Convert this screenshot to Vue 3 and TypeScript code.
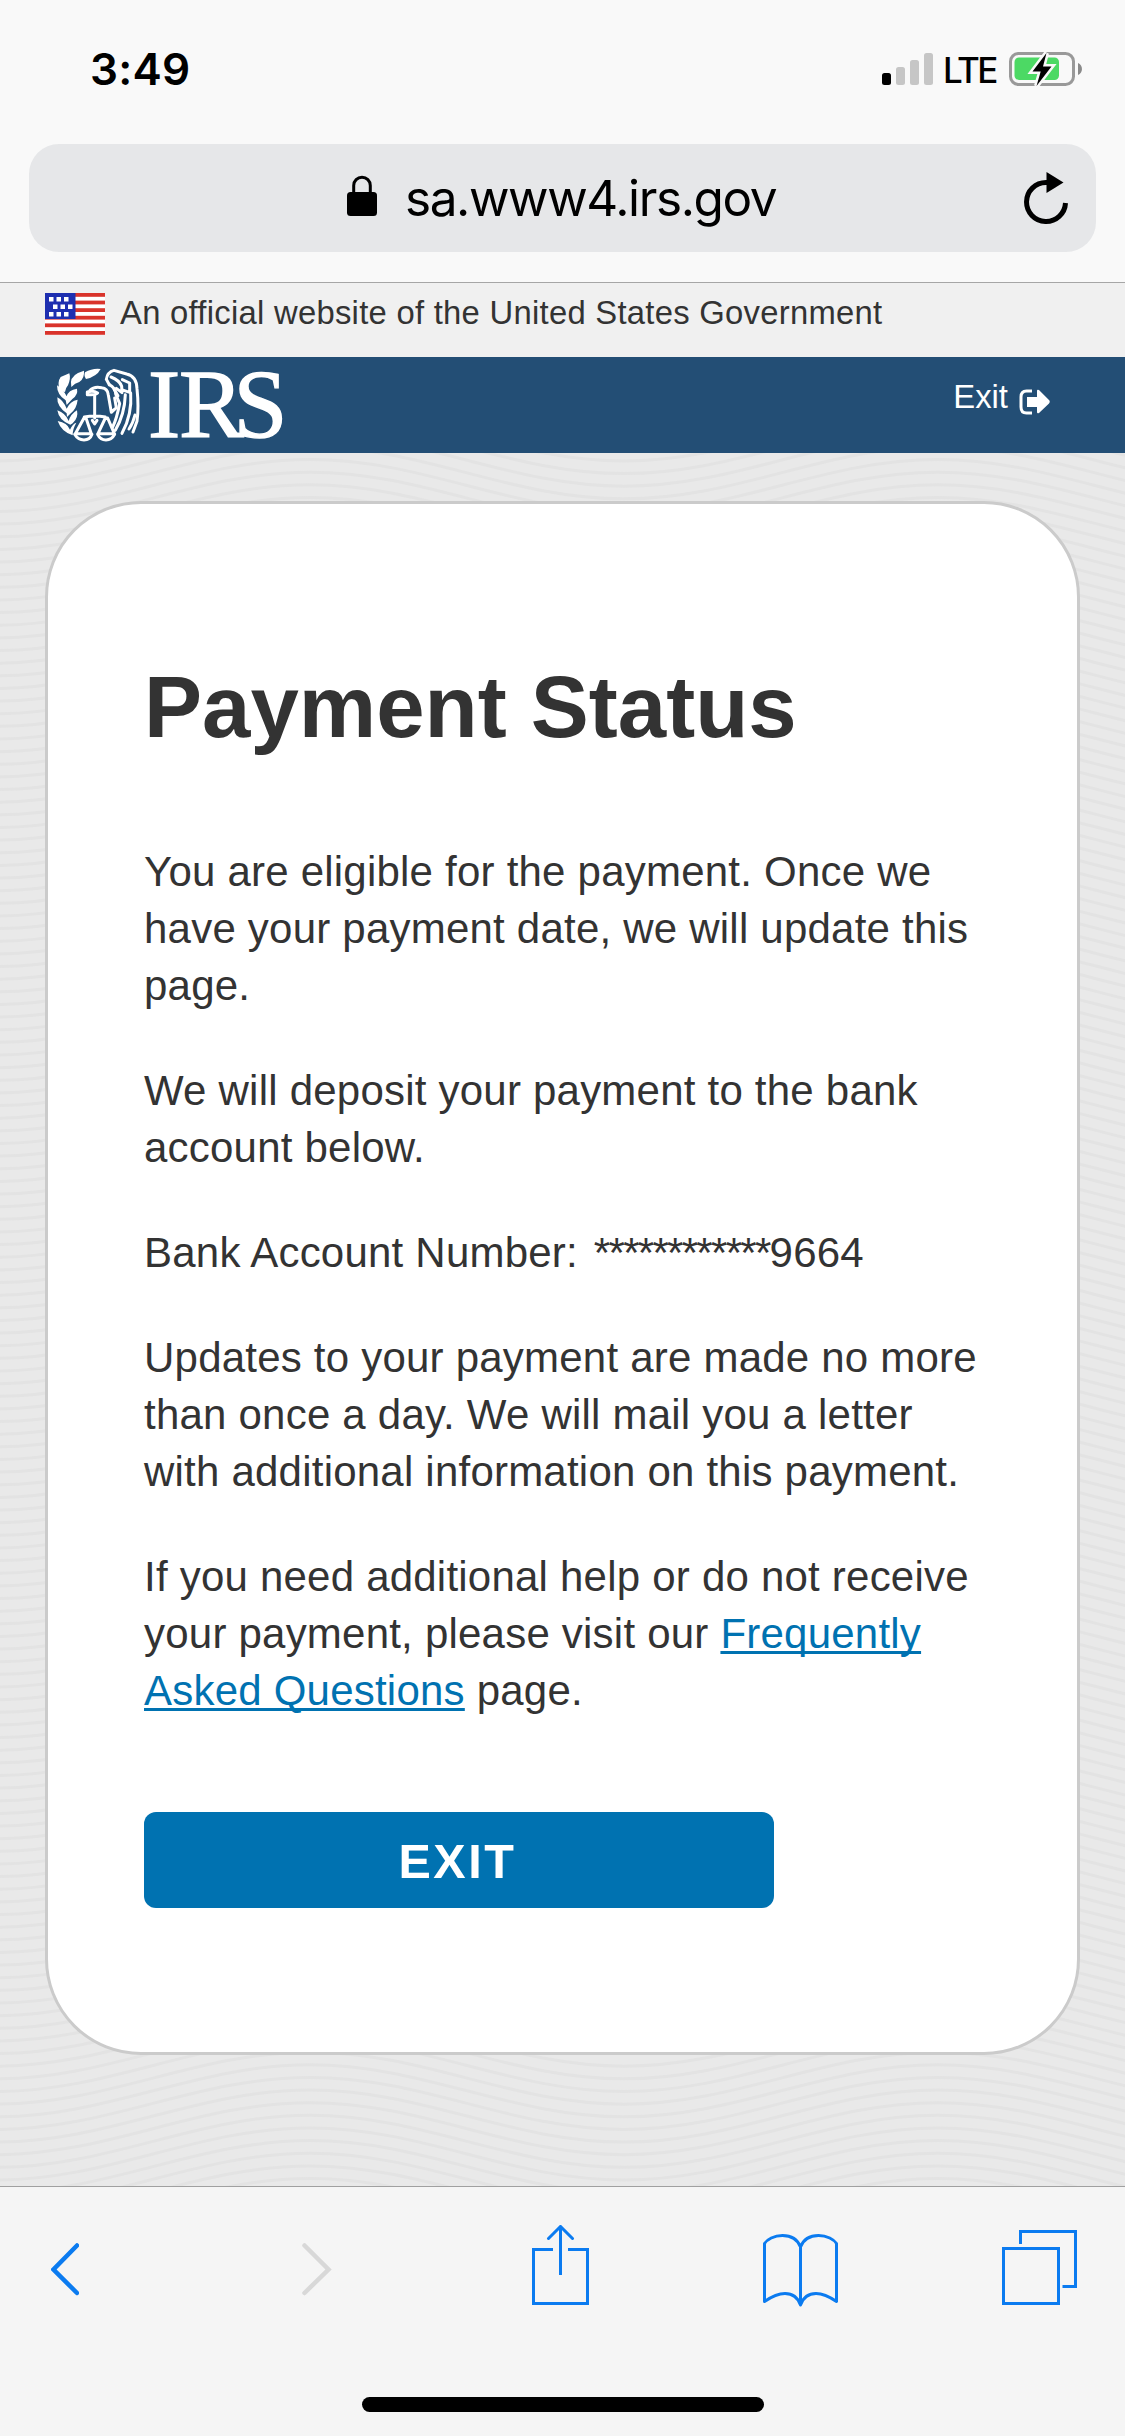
<script setup lang="ts">
interface SignalBar {
  x: number
  height: number
  active: boolean
}

const signalBars: SignalBar[] = [
  { x: 0, height: 12, active: true },
  { x: 14, height: 18, active: false },
  { x: 28, height: 25, active: false },
  { x: 42, height: 32, active: false },
]

const accountMask = '************'
const accountEnding = '9664'

const stripes = [0, 7.6, 15.2, 22.8, 30.4, 38]

const stars = [
  [4, 4], [11.5, 4], [19, 4],
  [8, 11.5], [15.5, 11.5], [23, 11.5],
  [4, 19], [11.5, 19], [19, 19],
]

// wavy page background, one path per line
const waveRise = 52
const waveGap = 12.64

const waves = Array.from({ length: 143 }, (_, i) => {
  const crest = -56.7 + i * waveGap
  const trough = crest + waveRise
  return (
    `M-4 ${trough}C110 ${trough} 196 ${crest} 310 ${crest}` +
    `S510 ${trough} 624 ${trough}S824 ${crest} 938 ${crest}` +
    `S1138 ${trough} 1252 ${trough}`
  )
})
</script>

<template>
  <div class="screen">
    <header class="browser-top">
      <div class="status-bar">
        <span class="time">3:49</span>
        <div class="status-icons">
          <svg class="signal" width="51" height="32" viewBox="0 0 51 32">
            <rect
              v-for="bar in signalBars"
              :key="bar.x"
              :x="bar.x"
              :y="32 - bar.height"
              width="9"
              :height="bar.height"
              rx="2.5"
              :fill="bar.active ? '#000' : '#c6c6c6'"
            />
          </svg>
          <span class="network">LTE</span>
          <svg class="battery" width="73" height="34" viewBox="0 0 73 34">
            <rect x="1.5" y="1.5" width="63" height="31" rx="8" fill="none" stroke="#999" stroke-width="3" />
            <rect x="5.5" y="5.5" width="44.5" height="22.5" rx="4.5" fill="#4cd964" />
            <path d="M69 11c5.3 2 5.3 10 0 12z" fill="#8a8a8a" />
            <path
              d="M37.5 1L23.5 19.5h8.2L27.5 34 42.5 14.5h-8.5z"
              fill="#000"
              stroke="#f9f9f9"
              stroke-width="5"
              paint-order="stroke"
            />
          </svg>
        </div>
      </div>

      <div class="address-bar">
        <svg class="lock" width="30" height="42" viewBox="0 0 30 42">
          <path d="M6.7 20V10.500a8.300 8.300 0 0 1 16.600 0V20" fill="none" stroke="#000" stroke-width="3" />
          <rect x="0" y="17" width="30" height="24" rx="3.5" />
        </svg>
        <span class="url">sa.www4.irs.gov</span>
        <svg class="reload" width="46" height="54" viewBox="0 0 46 54">
          <path d="M41.5 32A19.5 19.5 0 1 1 22 11.5H24" fill="none" stroke="#000" stroke-width="5" />
          <path d="M22.5 1L39.5 11.5 22.5 22z" />
        </svg>
      </div>
    </header>

    <div class="gov-banner">
      <svg class="flag" width="60" height="42" viewBox="0 0 60 42">
        <rect width="60" height="42" fill="#fff" />
        <rect v-for="y in stripes" :key="y" :y="y" width="60" height="3.8" fill="#d9332b" />
        <rect width="30.5" height="26" fill="#1e2fb0" />
        <rect
          v-for="([x, y], index) in stars"
          :key="index"
          :x="x"
          :y="y"
          width="4.5"
          height="4.5"
          fill="#fff"
        />
      </svg>
      <span>An official website of the United States Government</span>
    </div>

    <nav class="irs-bar">
      <svg class="irs-logo" width="240" height="96" viewBox="0 0 240 96">
        <g transform="translate(0 3) scale(0.3333)" fill="#fff">
          <!-- olive branch -->
          <path d="M120 37Q142 24 167 27Q155 50 123 57Q116 48 120 37Z" />
          <path d="M79 81Q72 52 99 39L117 32Q119 55 103 66Q90 69 79 81Z" />
          <path d="M44 92Q36 66 47 51L73 40Q78 55 69 76Q61 85 60 96Z" />
          <path d="M62 121Q36 105 36 76Q53 86 65 109Q70 90 96 86Q100 104 82 117L65 135Z" />
          <path d="M65 160Q35 139 37 112Q54 120 65 146Q75 123 98 119Q95 147 76 161L66 171Z" />
          <path d="M76 194Q42 182 37 151Q61 159 71 183Q77 162 96 151Q101 174 83 190Z" />
          <path d="M83 226Q49 215 38 183Q67 188 75 209Q83 191 94 188Q82 209 83 226Z" />
          <g fill="none" stroke="#fff" stroke-width="9" stroke-linejoin="round" stroke-linecap="round">
            <!-- eagle -->
            <path d="M127 104V96Q145 91 158 99Q153 106 129 104M135 91Q147 78 170 83Q188 84 190 105L199 157L214 143L209 114" />
            <path d="M193 74L184 58Q187 36 207 31L245 42Q275 49 276 86Q282 142 276 184L264 216" />
            <path d="M193 74Q211 83 212 102L224 131Q215 177 203 201" />
            <path d="M198 51Q224 61 230 79L231 98L214 85M232 59L254 69V97L236 91" />
            <path d="M241 104Q239 163 211 211M257 99Q262 164 231 220M219 107L207 87M270 165Q264 190 252 207" />
            <!-- scales -->
            <path d="M149 105V174M118 171Q149 165 181 171" />
            <path d="M117 174L91 221H139L123 174M181 174L159 221H208L188 174" />
            <path d="M89 223Q99 240 117 240T141 223M158 223Q166 240 183 240T209 223" />
            <path d="M142 181L149 192L156 181" />
          </g>
        </g>
        <text class="irs-word" x="103 134 188.5" y="79.5">IRS</text>
      </svg>
      <a class="exit-link">
        Exit
        <svg width="31" height="26" viewBox="0 0 31 26">
          <path d="M13 2H7.500Q2 2 2 8v10q0 6 5.500 6H13" fill="none" stroke="#fff" stroke-width="3" />
          <path d="M8 8h10V2q0-2 2-1l10 10q1.500 1.700 0 3.400L20 24q-2 1-2-1v-5H8z" fill="#fff" />
        </svg>
      </a>
    </nav>

    <main class="page">
      <svg class="waves" width="1125" height="1733" viewBox="0 0 1125 1733">
        <path v-for="(d, index) in waves" :key="index" :d="d" />
      </svg>
      <section class="card">
        <h1>Payment Status</h1>
        <p>You are eligible for the payment. Once we have your payment date, we will update this page.</p>
        <p>We will deposit your payment to the bank account below.</p>
        <p>Bank Account Number: <span class="mask">{{ accountMask }}</span>{{ accountEnding }}</p>
        <p>
          Updates to your payment are made no more than once a day. We will mail you a letter with
          additional information on this payment.
        </p>
        <p>
          If you need additional help or do not receive your payment, please visit our
          <a class="faq">Frequently Asked Questions</a> page.
        </p>
        <button type="button">EXIT</button>
      </section>
    </main>

    <footer class="toolbar">
      <div class="tools">
        <svg width="28" height="82" viewBox="0 0 28 82">
          <path class="chevron" d="M26 20.5L2.500 44.500 26 68" />
        </svg>
        <svg width="30" height="82" viewBox="0 0 30 82">
          <path class="chevron disabled" d="M2.500 20.5L26.500 44.500 2.500 68" />
        </svg>
        <svg width="57" height="82" viewBox="0 0 57 82">
          <path d="M21 24.5H1.5v54h54v-54H36M28.5 50V3" />
          <path d="M16.5 13.5L28.5 1.5 40.5 13.5" stroke-linecap="round" />
        </svg>
        <svg width="75" height="82" viewBox="0 0 75 82">
          <path
            d="M37.500 80V22C34 13 27 10.500 19.500 10.500 11 10.500 4 14.500 1.500 18.500V76.500C11 70 17 68.500 22 68.500 30 68.500 35 73 37.500 80C40 73 45 68.500 53 68.500 58 68.500 64 70 73.500 76.500V18.500C71 14.500 64 10.500 55.500 10.500 48 10.500 41 13 37.500 22"
            stroke-linejoin="round"
          />
        </svg>
        <svg width="75" height="82" viewBox="0 0 75 82">
          <rect x="1.5" y="23.5" width="55" height="55" />
          <path d="M18.5 19V6.5h55v55H60.5" />
        </svg>
      </div>
      <div class="home-indicator"></div>
    </footer>
  </div>
</template>

<style>
body {
  margin: 0;
}
</style>

<style scoped>
.screen {
  width: 1125px;
  height: 2436px;
  display: flex;
  flex-direction: column;
  overflow: hidden;
  background: #f9f9f9;
  color: #333333;
  font-family: "Liberation Sans", Arial, sans-serif;
}

svg {
  display: block;
  flex-shrink: 0;
}

.browser-top {
  box-sizing: border-box;
  height: 283px;
  border-bottom: 1px solid #a6a6a6;
  color: #000000;
  font-family: Inter, sans-serif;
}

.status-bar {
  height: 144px;
  box-sizing: border-box;
  padding: 0 43px 6px 90px;
  display: flex;
  align-items: center;
  justify-content: space-between;
}

.time {
  font-size: 44px;
  font-weight: 600;
  letter-spacing: 0.2px;
}

.status-icons {
  display: flex;
  align-items: center;
}

.network {
  width: 52px;
  margin: 2px 14px 0 10px;
  font-size: 35px;
  font-weight: 500;
  letter-spacing: -2.6px;
  white-space: nowrap;
}

.address-bar {
  height: 108px;
  box-sizing: border-box;
  margin: 0 29px;
  padding: 0 26px 0 318px;
  border-radius: 30px;
  background: #e6e7e9;
  display: flex;
  align-items: center;
}

.lock {
  margin-top: -4px;
}

.url {
  margin-left: 28px;
  font-size: 49.5px;
  letter-spacing: -1.4px;
}

.reload {
  margin-left: auto;
}

.gov-banner {
  height: 74px;
  box-sizing: border-box;
  padding: 10px 45px 0;
  background: #f0f0f0;
  display: flex;
  gap: 15px;
  font-size: 32.8px;
  line-height: 40px;
  letter-spacing: 0.27px;
}

.irs-bar {
  height: 96px;
  padding: 0 75px 0 45px;
  background: #234e75;
  display: flex;
  justify-content: space-between;
}

.irs-logo {
  overflow: visible;
}

.irs-word {
  font-family: "Liberation Serif", serif;
  font-size: 97px;
  fill: #ffffff;
  stroke: #ffffff;
  stroke-width: 1.4;
}

.exit-link {
  display: flex;
  gap: 11px;
  color: #ffffff;
  font-size: 32.8px;
  line-height: 80px;
}

.exit-link svg {
  margin-top: 32px;
}

.page {
  position: relative;
  height: 1733px;
  box-sizing: border-box;
  padding: 48px 45px 0;
  background: #e9e9e9;
}

.waves {
  position: absolute;
  inset: 0;
  fill: none;
  stroke: #e3e3e3;
  stroke-width: 3;
}

.card {
  position: relative;
  box-sizing: border-box;
  height: 1554px;
  padding: 151px 96px 0;
  border: 3px solid #cbcbcb;
  border-radius: 96px;
  background: #ffffff;
}

h1 {
  margin: 0 0 84px;
  font-size: 87px;
  line-height: 104px;
  letter-spacing: 0;
}

p {
  margin: 0 0 48px;
  font-size: 42px;
  line-height: 57px;
  letter-spacing: 0.22px;
}

.mask {
  margin-left: 4px;
  letter-spacing: -1.7px;
}

.faq {
  color: #0072b1;
  text-decoration: underline;
  text-decoration-thickness: 3px;
  text-underline-offset: 3px;
  text-decoration-skip-ink: none;
}

button {
  display: block;
  width: 630px;
  height: 96px;
  margin-top: 93px;
  padding: 1px 3px 0 0;
  border: 0;
  border-radius: 12px;
  background: #0072b1;
  color: #ffffff;
  font: bold 48.5px "Liberation Sans", Arial, sans-serif;
  letter-spacing: 2.6px;
}

.toolbar {
  height: 250px;
  box-sizing: border-box;
  border-top: 1px solid #a0a0a0;
  background: #f5f5f5;
}

.tools {
  display: grid;
  grid-template-columns: 251px 230px 231px 239px 75px;
  padding: 38px 48px 0 51px;
  fill: none;
  stroke: #0b7bf0;
  stroke-width: 3;
}

.chevron {
  stroke-width: 4.5;
  stroke-linecap: round;
}

.disabled {
  stroke: #d8d8d8;
}

.home-indicator {
  width: 402px;
  height: 15px;
  margin: 90px auto 0;
  border-radius: 8px;
  background: #000000;
}
</style>
